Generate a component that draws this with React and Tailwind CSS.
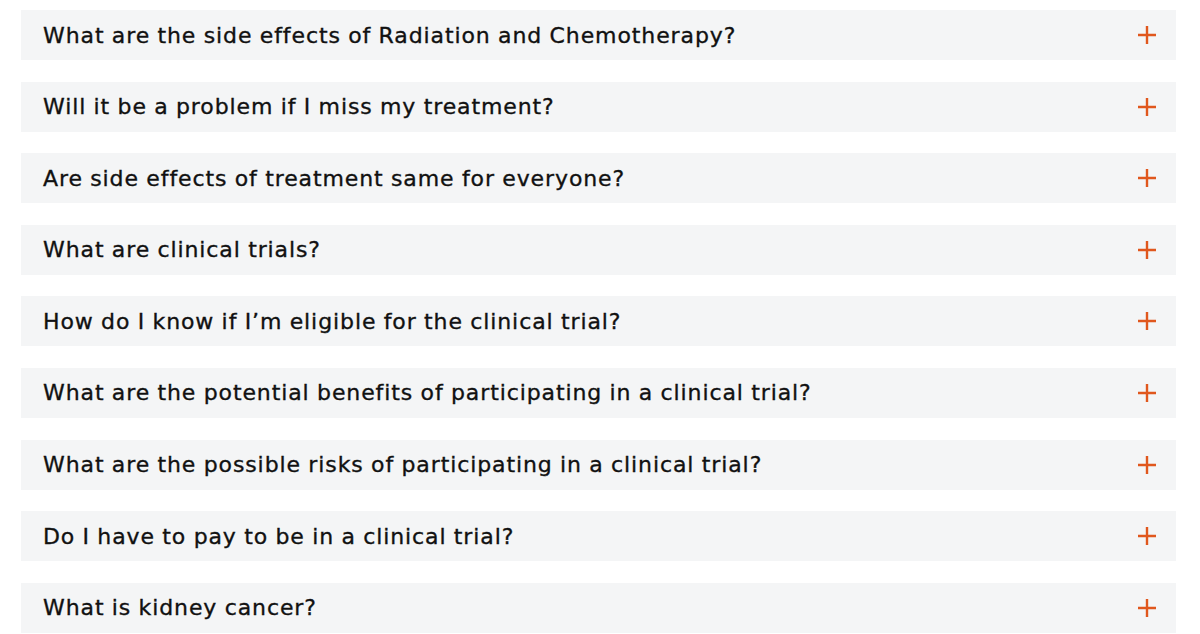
import React from "react";

const questions = [
  "What are the side effects of Radiation and Chemotherapy?",
  "Will it be a problem if I miss my treatment?",
  "Are side effects of treatment same for everyone?",
  "What are clinical trials?",
  "How do I know if I’m eligible for the clinical trial?",
  "What are the potential benefits of participating in a clinical trial?",
  "What are the possible risks of participating in a clinical trial?",
  "Do I have to pay to be in a clinical trial?",
  "What is kidney cancer?",
];

function PlusIcon() {
  return (
    <svg width="20" height="20" viewBox="0 0 20 20" className="shrink-0">
      <path d="M10 1v18M1 10h18" stroke="#e0571d" strokeWidth="2.4" />
    </svg>
  );
}

export default function App() {
  return (
    <main
      className="w-[1200px] h-[634px] overflow-hidden bg-white pt-[10px] pl-[21px] pr-[24px]"
      style={{ fontFamily: '"DejaVu Sans", "Open Sans", sans-serif' }}
    >
      <div className="flex flex-col gap-[21.6px]">
        {questions.map((q) => (
          <div
            key={q}
            className="h-[50px] bg-[#f4f5f6] flex items-center justify-between pl-[22px] pr-[19px]"
          >
            <span className="text-[22px] text-[#111111] tracking-[0.9px] [word-spacing:-0.5px] [-webkit-text-stroke:0.35px_#111111]">
              {q}
            </span>
            <PlusIcon />
          </div>
        ))}
      </div>
    </main>
  );
}
